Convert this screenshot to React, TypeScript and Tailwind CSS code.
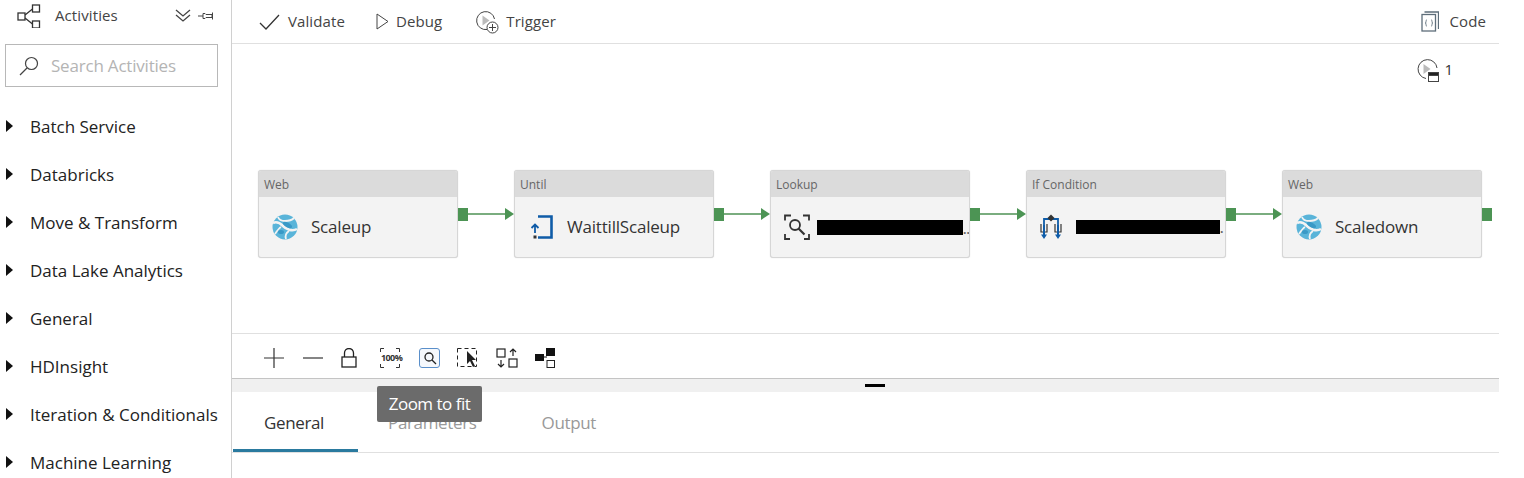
const categories = [
  "Batch Service",
  "Databricks",
  "Move & Transform",
  "Data Lake Analytics",
  "General",
  "HDInsight",
  "Iteration & Conditionals",
  "Machine Learning",
];

const GraphIcon = () => (
  <svg width="26" height="24" viewBox="0 0 26 24" fill="none" stroke="#333" strokeWidth="1.3">
    <rect x="1" y="9" width="7" height="7" />
    <rect x="15.5" y="1" width="7" height="7" />
    <rect x="15.5" y="17" width="7" height="7" />
    <path d="M8 11 15.5 5M8 14l7.5 6" />
  </svg>
);

const WebIcon = () => (
  <svg width="26" height="26" viewBox="0 0 26 26">
    <circle cx="13" cy="13" r="12.5" fill="#59b4d9" />
    <path d="M1 9c4-2 7 0 10 3s9 6 14 3" stroke="#f3f3f3" strokeWidth="2.6" fill="none" />
    <path d="M6 3c1 3 3 4 7 4s7-1 9-3M3 20c2-3 4-6 6-7M14 25c-1-3 0-6 3-8" stroke="#f3f3f3" strokeWidth="1.8" fill="none" />
    <ellipse cx="15.500" cy="11" rx="5" ry="2.200" fill="#3999c6" transform="rotate(30 15.500 11)" />
    <ellipse cx="9" cy="18" rx="3" ry="2" fill="#3999c6" />
  </svg>
);

const UntilIcon = () => (
  <svg width="24" height="24" viewBox="0 0 24 24" fill="none">
    <path d="M9 1.500h13.500v21H9" stroke="#0f5ca8" strokeWidth="2.600" />
    <path d="M6 18v-8M2.500 13 6 9.500 9.500 13" stroke="#0f5ca8" strokeWidth="1.800" />
    <rect x="4.500" y="20.500" width="3" height="3" fill="#333" />
  </svg>
);

const LookupIcon = () => (
  <svg width="26" height="26" viewBox="0 0 26 26" fill="none" stroke="#333" strokeWidth="1.800">
    <path d="M7 1.500H1v5M19 1.500h6v5M1 20v5h5M25 20v5h-5" />
    <circle cx="11" cy="11" r="5" />
    <path d="m14.500 14.500 6 6" strokeWidth="2.200" />
  </svg>
);

const IfIcon = () => (
  <svg width="24" height="26" viewBox="0 0 24 26" fill="none" className="ml-[-2px]">
    <path d="M4 13V5h14v8" stroke="#0f5ca8" strokeWidth="1.800" />
    <path d="M11 0.500 14.500 4 11 7.500 7.500 4z" fill="#333" />
    <path d="M1 10v8h2M7 10v8H5M15 10v8h2M21 10v8h-2" stroke="#333" strokeWidth="1.200" />
    <path d="M4 11v10M18 11v10" stroke="#0f5ca8" strokeWidth="2" />
    <path d="M1 20.500 4 25 7 20.500zM15 20.500 18 25 21 20.500z" fill="#0f5ca8" />
  </svg>
);

const Connector = ({ last }: { last?: boolean }) => (
  <div className={`flex items-center self-center ${last ? "w-[10px]" : "w-[56px]"}`}>
    <div className="h-[13px] w-[10px] shrink-0 bg-[#4c9454]" />
    {!last && (
      <>
        <div className="h-[2px] flex-1 bg-[#7aad7f]" />
        <svg width="9" height="12" viewBox="0 0 9 12" className="shrink-0">
          <path d="M0 0 9 6 0 12z" fill="#4c9454" />
        </svg>
      </>
    )}
  </div>
);

const ActivityNode = ({
  type,
  icon,
  name,
  redactClass,
  tail,
}: {
  type: string;
  icon: React.ReactNode;
  name?: string;
  redactClass?: string;
  tail?: string;
}) => (
  <div className="h-[88px] w-[200px] shrink-0 overflow-hidden rounded-[3px] border border-[#d6d6d6] bg-[#f3f3f3] shadow-[0_0_1px_#ccc]">
    <div className="flex h-[26px] items-center bg-[#dbdbdb] pl-[5px] pt-[2px] text-[12px] text-[#666]">{type}</div>
    <div className="flex h-[60px] items-center pl-[13px]">
      <div className="flex w-[26px] shrink-0 justify-center">{icon}</div>
      {name ? (
        <span className="ml-[13px] text-[17px] tracking-[-0.2px] text-[#333]">{name}</span>
      ) : (
        <div className="flex items-end">
          <div className={`${redactClass} bg-black`} />
          <span className="text-[12px] font-bold leading-[10px] text-[#666]">{tail}</span>
        </div>
      )}
    </div>
  </div>
);

export default function App() {
  return (
    <div className="relative flex h-[478px] w-[1524px] overflow-hidden bg-white font-['Open_Sans',sans-serif] text-[#333]">
      {/* left activities panel */}
      <aside className="w-[232px] shrink-0 border-r border-[#d0d0d0]">
        <div className="flex h-[31px] items-center pl-[17px]">
          <GraphIcon />
          <span className="ml-[12px] text-[15px] tracking-[0.1px] text-[#444]">Activities</span>
          <svg width="16" height="14" viewBox="0 0 16 14" fill="none" stroke="#444" strokeWidth="1.300" className="ml-[57px]">
            <path d="m1 1 7 6 7-6M1 6l7 6 7-6" />
          </svg>
          <svg width="16" height="10" viewBox="0 0 16 10" fill="none" stroke="#444" className="ml-[7px]">
            <path d="M0 5h5M5 2.500h2l1 1h6v3H8l-1 1H5zM14.500 1.500v7" />
          </svg>
        </div>
        <div className="ml-[5px] mt-[13px] flex h-[43px] w-[213px] items-center border border-[#b8b8b8] pl-[13px]">
          <svg width="20" height="20" viewBox="0 0 20 20" fill="none" stroke="#444" strokeWidth="1.200">
            <circle cx="12.500" cy="7.500" r="6" />
            <path d="M8 12 1 19" />
          </svg>
          <span className="ml-[12px] text-[17px] tracking-[-0.2px] text-[#b4b4b4]">Search Activities</span>
        </div>
        <ul className="mt-[16px]">
          {categories.map((c) => (
            <li key={c} className="flex h-[48px] items-center pl-[6px]">
              <svg width="7" height="12" viewBox="0 0 7 12" className="mt-[-2px] shrink-0">
                <path d="M0 0 7 6 0 12z" fill="#111" />
              </svg>
              <span className="ml-[17px] whitespace-nowrap text-[17px] text-[#222]">{c}</span>
            </li>
          ))}
        </ul>
      </aside>

      {/* designer */}
      <main className="flex w-[1267px] shrink-0 flex-col">
        <div className="flex h-[44px] shrink-0 items-center border-b border-[#e0e0e0] pl-[27px] pr-[13px] text-[15px] tracking-[0.1px] text-[#444]">
          <svg width="21" height="16" viewBox="0 0 21 16" fill="none" stroke="#333" strokeWidth="1.300">
            <path d="m1 9 6 6L20 1" />
          </svg>
          <span className="ml-[8px]">Validate</span>
          <svg width="13" height="17" viewBox="0 0 13 17" fill="none" stroke="#444" className="ml-[31px]">
            <path d="M1 1v15l11-7.500z" />
          </svg>
          <span className="ml-[7px]">Debug</span>
          <svg width="24" height="24" viewBox="0 0 24 24" fill="none" stroke="#444" className="ml-[33px]">
            <path d="M12 19.500A9 9 0 1 1 19.500 9" />
            <path d="M7.500 5.500v10l7-5z" fill="#bbb" stroke="none" />
            <circle cx="17.500" cy="17.500" r="5.500" fill="#fff" />
            <path d="M17.500 14v7M14 17.500h7" />
          </svg>
          <span className="ml-[7px]">Trigger</span>
          <svg width="18" height="21" viewBox="0 0 18 21" fill="none" stroke="#5e6e7a" className="ml-auto">
            <path d="M3.500 1h14v17" strokeWidth="1.300" />
            <rect x="1" y="3.500" width="13.500" height="16.500" strokeWidth="1.300" />
            <path d="M6 9c-1 0-1 .5-1 1.500S5 12 4 12c1 0 1 .5 1 1.500S5 15 6 15M10 9c1 0 1 .5 1 1.500s0 1.500 1 1.500c-1 0-1 .5-1 1.500s0 1.500-1 1.500" strokeWidth=".9" />
          </svg>
          <span className="ml-[11px]">Code</span>
        </div>

        <div className="h-[290px] shrink-0 border-b border-[#e0e0e0]">
          <div className="flex h-[126px] items-start justify-end pr-[46px] pt-[14px] text-[15px]">
            <svg width="24" height="24" viewBox="0 0 24 24" fill="none" stroke="#444" className="mr-[1px]">
              <path d="M10 20.500A9.500 9.500 0 1 1 21 10" />
              <path d="M7.500 6v10l7-5z" fill="#bbb" stroke="none" />
              <rect x="12.500" y="14.500" width="10" height="9" fill="#fff" />
              <rect x="12.500" y="14.500" width="10" height="3" fill="#222" />
            </svg>
            <span className="ml-[3px]">1</span>
          </div>
          <div className="flex pl-[26px]">
            <ActivityNode type="Web" icon={<WebIcon />} name="Scaleup" />
            <Connector />
            <ActivityNode type="Until" icon={<UntilIcon />} name="WaittillScaleup" />
            <Connector />
            <ActivityNode type="Lookup" icon={<LookupIcon />} redactClass="ml-[7px] mt-[1px] h-[15px] w-[146px]" tail=".." />
            <Connector />
            <ActivityNode type="If Condition" icon={<IfIcon />} redactClass="ml-[10px] h-[14px] w-[144px]" tail="." />
            <Connector />
            <ActivityNode type="Web" icon={<WebIcon />} name="Scaledown" />
            <Connector last />
          </div>
        </div>

        <div className="flex h-[45px] shrink-0 items-center border-b border-[#c4c4c4] pl-[32px] pt-[3px]">
          <svg width="20" height="20" viewBox="0 0 20 20" stroke="#333" strokeWidth="1.200">
            <path d="M0 10h20M10 0v20" />
          </svg>
          <svg width="20" height="20" viewBox="0 0 20 20" stroke="#333" strokeWidth="1.200" className="ml-[19px]">
            <path d="M0 10h20" />
          </svg>
          <svg width="16" height="20" viewBox="0 0 16 20" fill="none" stroke="#222" strokeWidth="1.300" className="ml-[18px]">
            <path d="M3.500 9V5a4.500 4.500 0 0 1 9 0v4" />
            <rect x="1" y="9" width="14" height="10" />
          </svg>
          <svg width="20" height="20" viewBox="0 0 20 20" fill="none" stroke="#333" className="ml-[23px]">
            <path d="M4 .5H.5V4M16 .5h3.500V4M.5 16v3.500H4M19.500 16v3.500H16" />
          </svg>
          <span className="ml-[-19px] w-[18px] text-center text-[9px] font-bold tracking-[-0.6px] text-[#333]">100%</span>
          <div className="ml-[20px] flex h-[20px] w-[21px] items-center justify-center rounded-[3px] border border-[#5a8fca] bg-[#f5f8fc]">
            <svg width="14" height="14" viewBox="0 0 14 14" fill="none" stroke="#222" strokeWidth="1.300">
              <circle cx="6" cy="6" r="4" />
              <path d="m9 9 4 4" />
            </svg>
          </div>
          <svg width="22" height="20" viewBox="0 0 22 20" className="ml-[17px]">
            <rect x=".5" y=".5" width="19" height="18" fill="none" stroke="#222" strokeDasharray="4 3" />
            <path d="M10 3v13l3-3 3 6 2-1-3-6h4z" fill="#222" />
          </svg>
          <svg width="22" height="20" viewBox="0 0 22 20" fill="none" stroke="#222" strokeWidth="1.200" className="ml-[17px]">
            <rect x="1" y="1" width="8" height="8" />
            <rect x="13" y="11" width="8" height="8" />
            <path d="M17 8V1M14 4l3-3 3 3M5 12v7M2 16l3 3 3-3" />
          </svg>
          <svg width="20" height="20" viewBox="0 0 20 20" className="ml-[17px]">
            <rect y="6" width="9" height="7" fill="#111" />
            <rect x="11" width="9" height="8" fill="#111" />
            <rect x="12" y="12.500" width="7.500" height="7" fill="none" stroke="#222" />
            <path d="M9 9h3" stroke="#111" />
          </svg>
        </div>

        <div className="flex h-[13px] shrink-0 items-end justify-center bg-[#f0f0f0] pb-[5px] pl-[18px]">
          <div className="h-[3px] w-[20px] bg-black" />
        </div>

        <div className="flex h-[61px] shrink-0 border-b border-[#e0e0e0] pl-[1px] text-[17px] tracking-[-0.35px]">
          <div className="flex w-[125px] items-center justify-center border-b-[3px] border-[#2a7a9f] pr-[3px] pt-[5px] text-[#333]">General</div>
          <div className="flex items-center pl-[30px] pr-[65px] pt-[2px] text-[#999]">Parameters</div>
          <div className="flex items-center pt-[2px] text-[#999]">Output</div>
        </div>
      </main>

      {/* tooltip over the tabs */}
      <div className="absolute left-[377px] top-[386px] flex h-[36px] w-[105px] items-center justify-center rounded-[2px] bg-[#6b6b6b] text-[17px] tracking-[-0.5px] text-white">
        Zoom to fit
      </div>
    </div>
  );
}
